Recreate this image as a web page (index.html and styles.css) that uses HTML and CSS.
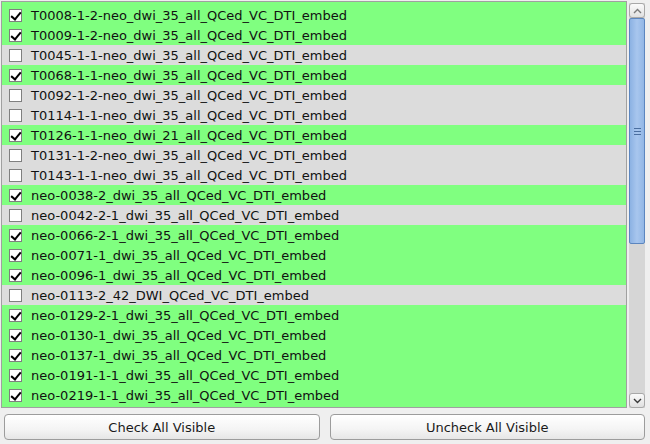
FILE: index.html
```html
<!DOCTYPE html>
<html>
<head>
<meta charset="utf-8">
<link rel="stylesheet" href="styles.css">
</head>
<body>
<div class="app">
  <div class="top">
    <div class="frame">
      <div class="viewport">
        <div class="list">
          <div class="row g"><span class="cb on"></span><span class="lbl">&nbsp;</span></div>
          <div class="row g"><span class="cb on"></span><span class="lbl">T0008-1-2-neo_dwi_35_all_QCed_VC_DTI_embed</span></div>
          <div class="row g"><span class="cb on"></span><span class="lbl">T0009-1-2-neo_dwi_35_all_QCed_VC_DTI_embed</span></div>
          <div class="row n"><span class="cb"></span><span class="lbl">T0045-1-1-neo_dwi_35_all_QCed_VC_DTI_embed</span></div>
          <div class="row g"><span class="cb on"></span><span class="lbl">T0068-1-1-neo_dwi_35_all_QCed_VC_DTI_embed</span></div>
          <div class="row n"><span class="cb"></span><span class="lbl">T0092-1-2-neo_dwi_35_all_QCed_VC_DTI_embed</span></div>
          <div class="row n"><span class="cb"></span><span class="lbl">T0114-1-1-neo_dwi_35_all_QCed_VC_DTI_embed</span></div>
          <div class="row g"><span class="cb on"></span><span class="lbl">T0126-1-1-neo_dwi_21_all_QCed_VC_DTI_embed</span></div>
          <div class="row n"><span class="cb"></span><span class="lbl">T0131-1-2-neo_dwi_35_all_QCed_VC_DTI_embed</span></div>
          <div class="row n"><span class="cb"></span><span class="lbl">T0143-1-1-neo_dwi_35_all_QCed_VC_DTI_embed</span></div>
          <div class="row g"><span class="cb on"></span><span class="lbl">neo-0038-2_dwi_35_all_QCed_VC_DTI_embed</span></div>
          <div class="row n"><span class="cb"></span><span class="lbl">neo-0042-2-1_dwi_35_all_QCed_VC_DTI_embed</span></div>
          <div class="row g"><span class="cb on"></span><span class="lbl">neo-0066-2-1_dwi_35_all_QCed_VC_DTI_embed</span></div>
          <div class="row g"><span class="cb on"></span><span class="lbl">neo-0071-1_dwi_35_all_QCed_VC_DTI_embed</span></div>
          <div class="row g"><span class="cb on"></span><span class="lbl">neo-0096-1_dwi_35_all_QCed_VC_DTI_embed</span></div>
          <div class="row n"><span class="cb"></span><span class="lbl">neo-0113-2_42_DWI_QCed_VC_DTI_embed</span></div>
          <div class="row g"><span class="cb on"></span><span class="lbl">neo-0129-2-1_dwi_35_all_QCed_VC_DTI_embed</span></div>
          <div class="row g"><span class="cb on"></span><span class="lbl">neo-0130-1_dwi_35_all_QCed_VC_DTI_embed</span></div>
          <div class="row g"><span class="cb on"></span><span class="lbl">neo-0137-1_dwi_35_all_QCed_VC_DTI_embed</span></div>
          <div class="row g"><span class="cb on"></span><span class="lbl">neo-0191-1-1_dwi_35_all_QCed_VC_DTI_embed</span></div>
          <div class="row g"><span class="cb on"></span><span class="lbl">neo-0219-1-1_dwi_35_all_QCed_VC_DTI_embed</span></div>
          <div class="row g"><span class="cb on"></span><span class="lbl">&nbsp;</span></div>
        </div>
      </div>
    </div>
    <div class="sb">
      <div class="sb-btn up"><svg width="9" height="6" viewBox="0 0 9 6"><path d="M1 5 L4.5 1.5 L8 5" fill="none" stroke="#7a7a7a" stroke-width="1.4"/></svg></div>
      <div class="thumb"><span class="grip"></span><span class="grip"></span><span class="grip"></span></div>
      <div class="track"></div>
      <div class="sb-btn down"><svg width="9" height="6" viewBox="0 0 9 6"><path d="M1 1 L4.5 4.5 L8 1" fill="none" stroke="#3a3a3a" stroke-width="1.4"/></svg></div>
    </div>
  </div>
  <div class="buttons">
    <button class="btn">Check All Visible</button>
    <button class="btn">Uncheck All Visible</button>
  </div>
</div>
</body>
</html>
```

FILE: styles.css
```css
html, body {
  margin: 0;
  padding: 0;
  background: #efefef;
  font-family: "DejaVu Sans", "Liberation Sans", sans-serif;
  font-size: 13px;
  color: #000;
}
.app {
  width: 650px;
  height: 444px;
  box-sizing: border-box;
  padding: 1px 5px 0 1px;
  display: flex;
  flex-direction: column;
}
.top {
  display: flex;
  height: 407px;
}
.frame {
  width: 626px;
  height: 407px;
  box-sizing: border-box;
  border: 1px solid #a0a0a0;
  background: #fff;
}
.viewport {
  height: 405px;
  overflow: hidden;
}
.list {
  margin-top: -17px;
}
.row {
  height: 20px;
  display: flex;
  align-items: center;
}
.row.g { background: #80ff80; }
.row.n { background: #dcdcdc; }
.cb {
  width: 13px;
  height: 13px;
  box-sizing: border-box;
  border: 1px solid #7f7f7f;
  background: #fff;
  margin-left: 7px;
  margin-top: 1px;
  position: relative;
  flex: none;
}
.cb.on::after {
  content: "";
  position: absolute;
  left: 3px;
  top: 0px;
  width: 4px;
  height: 8px;
  border-right: 2px solid #000;
  border-bottom: 2px solid #000;
  transform: rotate(40deg);
  transform-origin: center;
}
.lbl {
  margin-left: 9px;
  white-space: nowrap;
  color: #111;
}
.sb {
  margin-left: 2px;
  margin-top: 2px;
  width: 16px;
  height: 405px;
  display: flex;
  flex-direction: column;
  background: #d6d6d6;
}
.sb-btn {
  height: 15px;
  box-sizing: border-box;
  border: 1px solid #a8a8a8;
  border-radius: 3px;
  background: linear-gradient(#fbfbfb, #e0e0e0);
  display: flex;
  align-items: center;
  justify-content: center;
  flex: none;
}
.thumb {
  height: 226px;
  box-sizing: border-box;
  border: 1px solid #5c86bf;
  border-radius: 2px;
  background: linear-gradient(90deg, #8cb2e3, #a8c6ee 50%, #92b7e6);
  display: flex;
  flex-direction: column;
  align-items: center;
  justify-content: center;
  gap: 2px;
  flex: none;
}
.grip {
  width: 7px;
  height: 1px;
  background: #4a6ea0;
}
.track {
  flex: 1;
  background: #d6d6d6;
}
.buttons {
  display: flex;
  gap: 10px;
  margin-top: 6px;
  margin-left: 3px;
}
.btn {
  flex: 1;
  height: 26px;
  box-sizing: border-box;
  border: 1px solid #9c9c9c;
  border-radius: 4px;
  background: linear-gradient(#ffffff, #f4f4f4 60%, #e6e6e6);
  font-family: "DejaVu Sans", "Liberation Sans", sans-serif;
  font-size: 13px;
  color: #1a1a1a;
  padding: 0;
}
```
